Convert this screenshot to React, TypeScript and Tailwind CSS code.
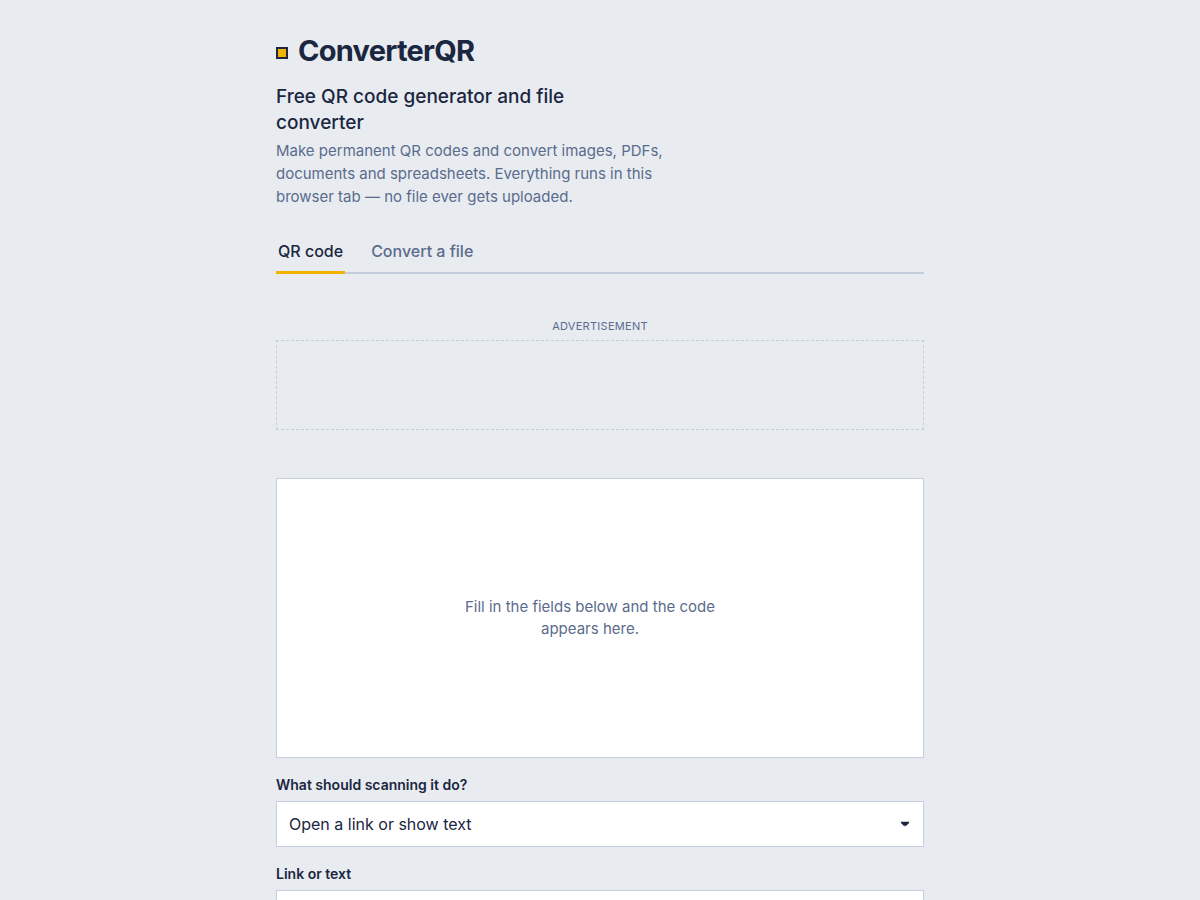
import { useState } from 'react';

const tabs = ['QR code', 'Convert a file'];

const kinds = [
  'Open a link or show text',
  'Join a Wi-Fi network',
  'Save a contact',
  'Write an email',
];

function Header() {
  return (
    <header>
      <div className="flex items-center gap-2.5">
        <span className="mt-1 size-3 shrink-0 border-2 border-[#1b2640] bg-[#f0b400]" />
        <h1 className="text-[29px] leading-9 font-bold tracking-tight">ConverterQR</h1>
      </div>
      <p className="mt-[15px] max-w-[320px] text-[19px] leading-[26px] font-medium">
        Free QR code generator and file converter
      </p>
      <p className="mt-[3px] max-w-[410px] text-[15px] leading-[23px] text-[#5b6b8c]">
        Make permanent QR codes and convert images, PDFs, documents and spreadsheets. Everything
        runs in this browser tab — no file ever gets uploaded.
      </p>
    </header>
  );
}

function Tabs() {
  const [active, setActive] = useState(tabs[0]);
  return (
    <div role="tablist" className="mt-[21px] flex gap-6 border-b-2 border-[#c3cddb]">
      {tabs.map((tab) => (
        <button
          key={tab}
          type="button"
          role="tab"
          aria-selected={tab === active}
          onClick={() => setActive(tab)}
          className={
            tab === active
              ? '-mb-0.5 border-b-3 border-[#f0b400] px-0.5 pt-2.5 pb-2 text-base font-medium text-[#1b2640]'
              : '-mb-0.5 border-b-3 border-transparent px-0.5 pt-2.5 pb-2 text-base font-medium text-[#5b6b8c]'
          }
        >
          {tab}
        </button>
      ))}
    </div>
  );
}

export default function App() {
  return (
    <div className="min-h-screen bg-[#e8ecf1] px-6 font-['Inter','Liberation_Sans',sans-serif] text-[#1b2640]">
      <main className="mx-auto max-w-[648px] pt-[33px] pb-12">
        <Header />
        <Tabs />

        <aside className="mt-11 text-center">
          <p className="text-[11px] leading-4 tracking-wide text-[#5b6b8c] uppercase">
            Advertisement
          </p>
          <div className="mt-1.5 h-[90px] border border-dashed border-[#c3cddb]" />
        </aside>

        <section className="mt-12 flex min-h-[280px] items-center justify-center border border-[#c3cddb] bg-white pr-5">
          <p className="max-w-[280px] text-center text-[15px] leading-[22px] text-[#5b6b8c]">
            Fill in the fields below and the code appears here.
          </p>
        </section>

        <form className="mt-4">
          <label htmlFor="kind" className="block text-sm leading-[21px] font-semibold">
            What should scanning it do?
          </label>
          <div className="relative mt-1.5">
            <select
              id="kind"
              className="block h-[46px] w-full appearance-none border border-[#c3cddb] bg-white pr-9 pl-3 text-base"
            >
              {kinds.map((kind) => (
                <option key={kind}>{kind}</option>
              ))}
            </select>
            <svg
              aria-hidden="true"
              viewBox="0 0 10 5"
              className="pointer-events-none absolute top-1/2 right-3.5 h-[5px] w-2.5 -translate-y-1/2"
            >
              <path d="M1 0h8v2H8v1H7v1H5.5v1h-1V4H3V3H2V2H1z" fill="#1b2640" />
            </svg>
          </div>

          <label htmlFor="content" className="mt-4 block text-sm leading-[21px] font-semibold">
            Link or text
          </label>
          <textarea
            id="content"
            rows={3}
            className="mt-1.5 block w-full border border-[#c3cddb] bg-white px-3 py-2.5 text-base"
          />
        </form>
      </main>
    </div>
  );
}
